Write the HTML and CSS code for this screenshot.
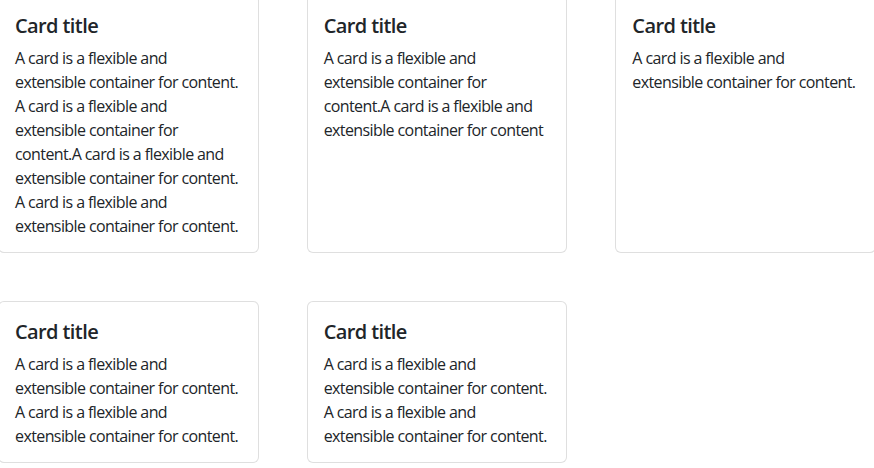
FILE: index.html
```html
<!DOCTYPE html>
<html lang="en">
<head>
<meta charset="utf-8">
<title>Cards</title>
<link rel="stylesheet" href="styles.css">
</head>
<body>
<div class="row">
  <div class="card">
    <div class="card-body">
      <h5 class="card-title">Card title</h5>
      <p class="card-text">A card is a flexible and<br>extensible container for content. A card is a flexible and<br>extensible container for content.A card is a flexible and<br>extensible container for content. A card is a flexible and<br>extensible container for content.</p>
    </div>
  </div>
  <div class="card">
    <div class="card-body">
      <h5 class="card-title">Card title</h5>
      <p class="card-text">A card is a flexible and<br>extensible container for content.A card is a flexible and<br>extensible container for content</p>
    </div>
  </div>
  <div class="card">
    <div class="card-body">
      <h5 class="card-title">Card title</h5>
      <p class="card-text">A card is a flexible and<br>extensible container for content.</p>
    </div>
  </div>
  <div class="card">
    <div class="card-body">
      <h5 class="card-title">Card title</h5>
      <p class="card-text">A card is a flexible and<br>extensible container for content. A card is a flexible and<br>extensible container for content.</p>
    </div>
  </div>
  <div class="card">
    <div class="card-body">
      <h5 class="card-title">Card title</h5>
      <p class="card-text">A card is a flexible and<br>extensible container for content. A card is a flexible and<br>extensible container for content.</p>
    </div>
  </div>
</div>
</body>
</html>
```

FILE: styles.css
```css
html, body {
  margin: 0;
  padding: 0;
  background: #fff;
}
body {
  font-family: "Open Sans", "Noto Sans", sans-serif;
  font-size: 16px;
  line-height: 24px;
  letter-spacing: -0.6px;
  color: #212529;
  overflow: hidden;
}
.row {
  display: grid;
  grid-template-columns: repeat(3, 1fr);
  column-gap: 48px;
  row-gap: 48px;
  align-items: stretch;
  width: 878px;
  margin: -5px 0 0 -2px;
}
.card {
  border: 1px solid rgba(0, 0, 0, 0.125);
  border-radius: 6px;
  background: #fff;
}
.card-body {
  padding: 18px 16px 14px;
}
.card-title {
  margin: 0 0 8px 0;
  font-size: 20px;
  line-height: 24px;
  font-weight: 600;
  letter-spacing: -0.6px;
}
.card-text {
  margin: 0;
}
```
